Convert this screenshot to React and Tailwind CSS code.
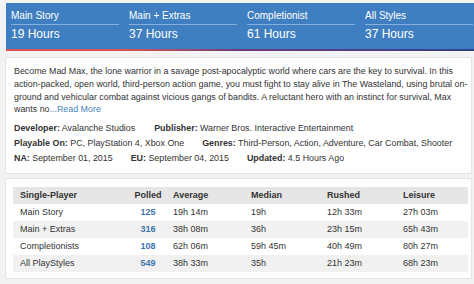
export default function App() {
  const cols = [
    ["Main Story", "19 Hours"],
    ["Main + Extras", "37 Hours"],
    ["Completionist", "61 Hours"],
    ["All Styles", "37 Hours"],
  ];
  const rows = [
    ["Main Story", "125", "19h 14m", "19h", "12h 33m", "27h 03m"],
    ["Main + Extras", "316", "38h 08m", "36h", "23h 15m", "65h 43m"],
    ["Completionists", "108", "62h 06m", "59h 45m", "40h 49m", "80h 27m"],
    ["All PlayStyles", "549", "38h 33m", "35h", "21h 23m", "68h 23m"],
  ];
  return (
    <div className="w-[474px] h-[284px] overflow-hidden bg-[#f3f3f3] font-['Liberation_Sans',Arial,sans-serif] text-[#333]">
      <div className="ml-[6px] mt-[3px]">
        <div className="h-[46px] bg-[#3f7fc1] flex pl-[5px] pt-[6px]">
          {cols.map(([l, v]) => (
            <div key={l} className="w-[108px] mr-[10px] shrink-0 text-white">
              <div className="text-[10px] leading-[14px] pb-[1px] border-b border-[#86b0dc]">{l}</div>
              <div className="text-[12px] leading-[16px] mt-[1px]">{v}</div>
            </div>
          ))}
        </div>
        <div className="h-[2px] bg-gradient-to-r from-[#d9534f] from-25% via-[#6a3b7a] to-[#2c3f8c]" />
      </div>

      <div className="ml-[5px] mr-[2px] mt-[6px] bg-white border border-[#e4e4e4] pl-[8px] pr-[5px] pt-[7px] pb-[8px]">
        <p className="text-[8.9px] leading-[12.75px] whitespace-nowrap">
          <span className="block">Become Mad Max, the lone warrior in a savage post-apocalyptic world where cars are the key to survival. In this</span>
          <span className="block">action-packed, open world, third-person action game, you must fight to stay alive in The Wasteland, using brutal on-</span>
          <span className="block">ground and vehicular combat against vicious gangs of bandits. A reluctant hero with an instinct for survival, Max</span>
          <span className="block">wants no<span className="text-[#4a7fb8]">...Read More</span></span>
        </p>
        <div className="mt-[5px] text-[8.9px] leading-[14.8px]">
          <div className="flex gap-x-[19px]">
            <span><b>Developer:</b> Avalanche Studios</span>
            <span><b>Publisher:</b> Warner Bros. Interactive Entertainment</span>
          </div>
          <div className="flex gap-x-[18px]">
            <span><b>Playable On:</b> PC, PlayStation 4, Xbox One</span>
            <span><b>Genres:</b> Third-Person, Action, Adventure, Car Combat, Shooter</span>
          </div>
          <div className="flex gap-x-[18px]">
            <span><b>NA:</b> September 01, 2015</span>
            <span><b>EU:</b> September 04, 2015</span>
            <span><b>Updated:</b> 4.5 Hours Ago</span>
          </div>
        </div>
      </div>

      <div className="ml-[5px] mr-[2px] mt-[4px] bg-white border border-[#e4e4e4] pl-[7px] pr-[3px] pt-[8px] pb-[6px]">
        <div className="grid grid-cols-[116px_38px_78px_76px_76px_1fr] text-[9px] leading-[17px]">
          <div className="contents font-bold">
            <div className="bg-[#e6e6e6] pl-[7px]">Single-Player</div>
            <div className="bg-[#e6e6e6] text-center">Polled</div>
            <div className="bg-[#e6e6e6] pl-[6px]">Average</div>
            <div className="bg-[#e6e6e6] pl-[6px]">Median</div>
            <div className="bg-[#e6e6e6] pl-[6px]">Rushed</div>
            <div className="bg-[#e6e6e6] pl-[6px]">Leisure</div>
          </div>
          {rows.map((r, i) => {
            const bg = i % 2 === 1 ? "bg-[#f1f1f1]" : "bg-white";
            return (
              <div key={r[0]} className="contents">
                <div className={`${bg} pl-[7px]`}>{r[0]}</div>
                <div className={`${bg} text-center font-bold text-[#3e74ad]`}>{r[1]}</div>
                <div className={`${bg} pl-[6px]`}>{r[2]}</div>
                <div className={`${bg} pl-[6px]`}>{r[3]}</div>
                <div className={`${bg} pl-[6px]`}>{r[4]}</div>
                <div className={`${bg} pl-[6px]`}>{r[5]}</div>
              </div>
            );
          })}
        </div>
      </div>
    </div>
  );
}
